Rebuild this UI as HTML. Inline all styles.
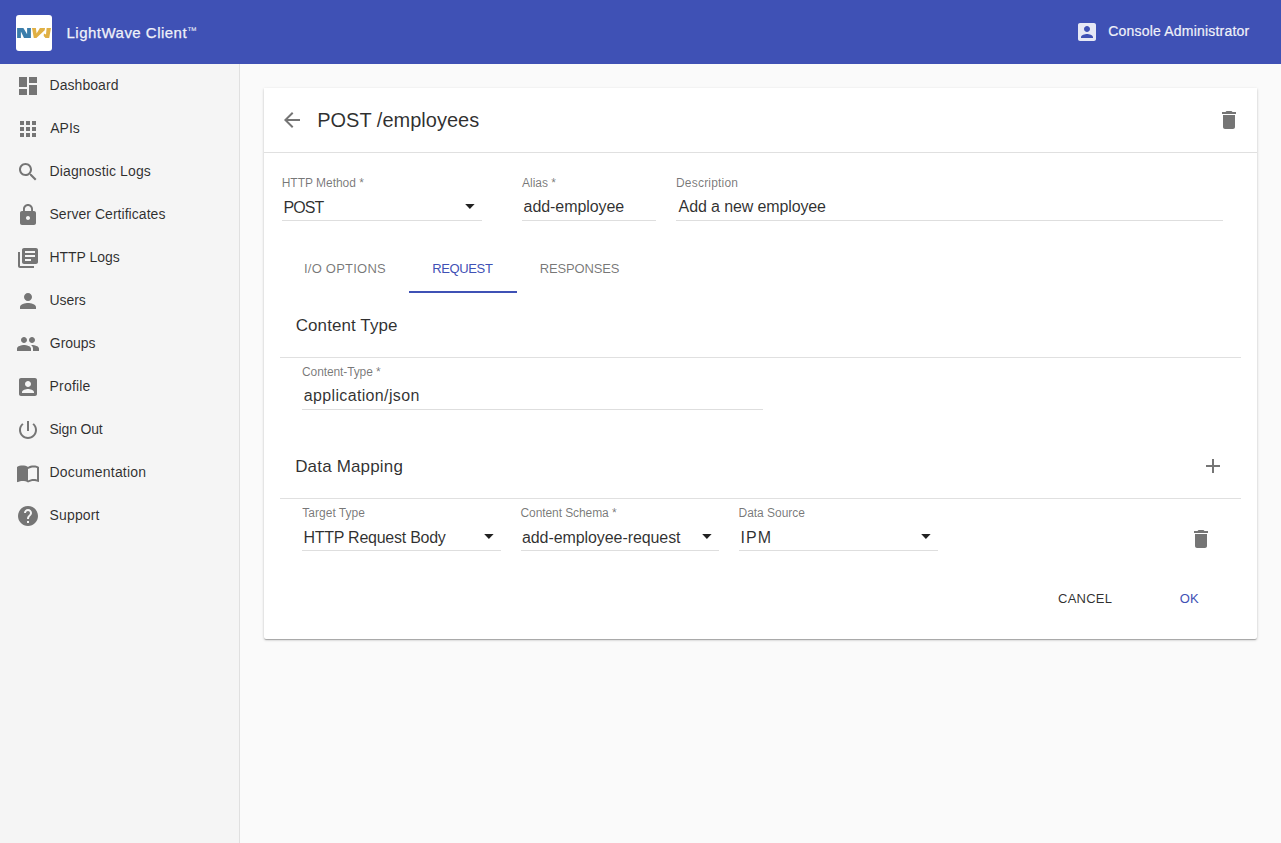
<!DOCTYPE html>
<html><head><meta charset="utf-8">
<style>
*{box-sizing:border-box;margin:0;padding:0}
html,body{width:1281px;height:843px;overflow:hidden;background:#fafafa;font-family:"Liberation Sans",sans-serif;color:rgba(0,0,0,.87)}
.t{position:absolute;white-space:nowrap;line-height:1}
.ic{position:absolute}
.hr{position:absolute;height:1px;background:#e0e0e0}
.ul{position:absolute;height:1px;background:#dedede}
.tri{position:absolute;width:0;height:0;border-left:5px solid transparent;border-right:5px solid transparent;border-top:5px solid rgba(0,0,0,.87)}
</style></head><body>
<div style="position:absolute;left:0;top:0;width:1281px;height:64px;background:#3f51b5"></div>
<div style="position:absolute;left:16px;top:15px;width:36px;height:36px;background:#fff;border-radius:3px"></div>
<svg width="36" height="36" viewBox="0 0 36 36" style="position:absolute;left:16px;top:15px">
<path d="M1.1 13 L7.4 13 L11.1 19.3 L11.1 13 L14.9 13 L14.9 23 L8 23 L4.9 16.6 L4.9 23 L1.1 23 Z" fill="#3b7eab"/>
<path d="M16 13 L19.9 13 L20.6 18.5 L23.9 13 L29 13 L28.7 15.3 L20.4 23 L17.8 23 Z" fill="#e0b045"/>
<path d="M30.6 13 L35 13 L33.2 23 L29.5 23 L27.7 21 L27.9 18.5 L30 19.5 Z" fill="#e0b045"/>
</svg>
<svg class="ic" viewBox="0 0 24 24" style="left:1075px;top:20px;width:24px;height:24px;fill:#e6e8f5"><path d="M3 5v14c0 1.1.89 2 2 2h14c1.1 0 2-.9 2-2V5c0-1.1-.9-2-2-2H5c-1.11 0-2 .9-2 2zm12 4c0 1.66-1.34 3-3 3s-3-1.34-3-3 1.34-3 3-3 3 1.34 3 3zm-9 8c0-2 4-3.1 6-3.1s6 1.1 6 3.1v1H6v-1z"/></svg>
<div style="position:absolute;left:0;top:64px;width:240px;height:779px;background:#f5f5f5;border-right:1px solid #e0e0e0"></div>
<svg class="ic" viewBox="0 0 24 24" style="left:16px;top:74px;width:24px;height:24px;fill:#757575"><path d="M3 13h8V3H3v10zm0 8h8v-6H3v6zm10 0h8V11h-8v10zm0-18v6h8V3h-8z"/></svg>
<svg class="ic" viewBox="0 0 24 24" style="left:16px;top:117px;width:24px;height:24px;fill:#757575"><path d="M4 8h4V4H4v4zm6 12h4v-4h-4v4zm-6 0h4v-4H4v4zm0-6h4v-4H4v4zm6 0h4v-4h-4v4zm6-10v4h4V4h-4zm-6 4h4V4h-4v4zm6 6h4v-4h-4v4zm0 6h4v-4h-4v4z"/></svg>
<svg class="ic" viewBox="0 0 24 24" style="left:16px;top:160px;width:24px;height:24px;fill:#757575"><path d="M15.5 14h-.79l-.28-.27C15.41 12.59 16 11.11 16 9.5 16 5.91 13.09 3 9.5 3S3 5.91 3 9.5 5.91 16 9.5 16c1.61 0 3.09-.59 4.23-1.57l.27.28v.79l5 4.99L20.49 19l-4.99-5zm-6 0C7.01 14 5 11.99 5 9.5S7.01 5 9.5 5 14 7.01 14 9.5 11.99 14 9.5 14z"/></svg>
<svg class="ic" viewBox="0 0 24 24" style="left:16px;top:203px;width:24px;height:24px;fill:#757575"><path d="M18 8h-1V6c0-2.76-2.24-5-5-5S7 3.24 7 6v2H6c-1.1 0-2 .9-2 2v10c0 1.1.9 2 2 2h12c1.1 0 2-.9 2-2V10c0-1.1-.9-2-2-2zm-6 9c-1.1 0-2-.9-2-2s.9-2 2-2 2 .9 2 2-.9 2-2 2zm3.1-9H8.9V6c0-1.71 1.39-3.1 3.1-3.1 1.71 0 3.1 1.39 3.1 3.1v2z"/></svg>
<svg class="ic" viewBox="0 0 24 24" style="left:16px;top:246px;width:24px;height:24px;fill:#757575"><path d="M4 6H2v14c0 1.1.9 2 2 2h14v-2H4V6zm16-4H8c-1.1 0-2 .9-2 2v12c0 1.1.9 2 2 2h12c1.1 0 2-.9 2-2V4c0-1.1-.9-2-2-2zm-1 9H9V9h10v2zm-4 4H9v-2h6v2zm4-8H9V5h10v2z"/></svg>
<svg class="ic" viewBox="0 0 24 24" style="left:16px;top:289px;width:24px;height:24px;fill:#757575"><path d="M12 12c2.21 0 4-1.79 4-4s-1.79-4-4-4-4 1.79-4 4 1.79 4 4 4zm0 2c-2.67 0-8 1.34-8 4v2h16v-2c0-2.66-5.33-4-8-4z"/></svg>
<svg class="ic" viewBox="0 0 24 24" style="left:16px;top:332px;width:24px;height:24px;fill:#757575"><path d="M16 11c1.66 0 2.99-1.34 2.99-3S17.66 5 16 5c-1.66 0-3 1.34-3 3s1.34 3 3 3zm-8 0c1.66 0 2.99-1.34 2.99-3S9.66 5 8 5C6.34 5 5 6.34 5 8s1.34 3 3 3zm0 2c-2.33 0-7 1.17-7 3.5V19h14v-2.5c0-2.33-4.67-3.5-7-3.5zm8 0c-.29 0-.62.02-.97.05 1.16.84 1.97 1.97 1.97 3.45V19h6v-2.5c0-2.330-4.67-3.5-7-3.5z"/></svg>
<svg class="ic" viewBox="0 0 24 24" style="left:16px;top:375px;width:24px;height:24px;fill:#757575"><path d="M3 5v14c0 1.1.89 2 2 2h14c1.1 0 2-.9 2-2V5c0-1.1-.9-2-2-2H5c-1.11 0-2 .9-2 2zm12 4c0 1.66-1.34 3-3 3s-3-1.34-3-3 1.34-3 3-3 3 1.34 3 3zm-9 8c0-2 4-3.1 6-3.1s6 1.1 6 3.1v1H6v-1z"/></svg>
<svg class="ic" viewBox="0 0 24 24" style="left:16px;top:418px;width:24px;height:24px;fill:#757575"><path d="M13 3h-2v10h2V3zm4.83 2.17l-1.42 1.42C17.99 7.86 19 9.81 19 12c0 3.87-3.13 7-7 7s-7-3.13-7-7c0-2.19 1.01-4.14 2.58-5.42L6.17 5.17C4.23 6.82 3 9.26 3 12c0 4.97 4.03 9 9 9s9-4.03 9-9c0-2.74-1.23-5.18-3.17-6.83z"/></svg>
<svg class="ic" viewBox="0 0 24 24" style="left:16px;top:461px;width:24px;height:24px;fill:#757575"><path d="M21 5c-1.11-.35-2.33-.5-3.5-.5-1.95 0-4.05.4-5.5 1.5-1.45-1.1-3.55-1.5-5.5-1.5S2.45 4.9 1 6v14.65c0 .25.25.5.5.5.1 0 .15-.05.25-.05C3.1 20.45 5.05 20 6.5 20c1.95 0 4.05.4 5.5 1.5 1.35-.85 3.8-1.5 5.5-1.5 1.65 0 3.35.3 4.75 1.05.1.05.15.05.25.05.25 0 .5-.25.5-.5V6c-.6-.45-1.25-.75-2-1zm0 13.5c-1.1-.35-2.3-.5-3.5-.5-1.7 0-4.15.65-5.5 1.5V8c1.35-.85 3.8-1.5 5.5-1.5 1.2 0 2.4.15 3.5.5v11.5z"/></svg>
<svg class="ic" viewBox="0 0 24 24" style="left:16px;top:504px;width:24px;height:24px;fill:#757575"><path d="M12 2C6.48 2 2 6.48 2 12s4.48 10 10 10 10-4.48 10-10S17.52 2 12 2zm1 17h-2v-2h2v2zm2.07-7.75l-.9.92C13.45 12.9 13 13.5 13 15h-2v-.5c0-1.1.45-2.1 1.17-2.83l1.24-1.26c.37-.36.59-.86.59-1.41 0-1.1-.9-2-2-2s-2 .9-2 2H8c0-2.21 1.79-4 4-4s4 1.79 4 4c0 .88-.36 1.68-.93 2.25z"/></svg>
<div style="position:absolute;left:264px;top:88px;width:993px;height:551px;background:#fff;border-radius:0 0 2px 2px;box-shadow:0 1px 3px rgba(0,0,0,.2),0 1px 1px rgba(0,0,0,.14),0 2px 1px -1px rgba(0,0,0,.12)"></div>
<svg class="ic" viewBox="0 0 24 24" style="left:280px;top:108px;width:24px;height:24px;fill:#757575"><path d="M20 11H7.83l5.59-5.59L12 4l-8 8 8 8 1.41-1.41L7.83 13H20v-2z"/></svg>
<svg class="ic" viewBox="0 0 24 24" style="left:1217px;top:108px;width:24px;height:24px;fill:#757575"><path d="M6 19c0 1.1.9 2 2 2h8c1.1 0 2-.9 2-2V7H6v12zM19 4h-3.5l-1-1h-5l-1 1H5v2h14V4z"/></svg>
<div class="hr" style="left:264px;top:152px;width:993px"></div>
<svg style="position:absolute;left:465px;top:204px" width="10" height="5" viewBox="0 0 10 5"><path d="M0.2 0 L9.6 0 L4.9 4.9 Z" fill="rgba(0,0,0,.87)"/></svg>
<div class="ul" style="left:282px;top:220px;width:200px"></div>
<div class="ul" style="left:522px;top:220px;width:134px"></div>
<div class="ul" style="left:676px;top:220px;width:547px"></div>
<div style="position:absolute;left:409px;top:291px;width:108px;height:2px;background:#3f51b5"></div>
<div class="hr" style="left:280px;top:357px;width:961px"></div>
<div class="ul" style="left:302px;top:409px;width:461px"></div>
<svg class="ic" viewBox="0 0 24 24" style="left:1201px;top:454px;width:24px;height:24px;fill:#757575"><path d="M19 13h-6v6h-2v-6H5v-2h6V5h2v6h6v2z"/></svg>
<div class="hr" style="left:280px;top:498px;width:961px"></div>
<svg style="position:absolute;left:484px;top:534px" width="10" height="5" viewBox="0 0 10 5"><path d="M0.2 0 L9.6 0 L4.9 4.9 Z" fill="rgba(0,0,0,.87)"/></svg>
<div class="ul" style="left:302px;top:550px;width:199px"></div>
<svg style="position:absolute;left:702px;top:534px" width="10" height="5" viewBox="0 0 10 5"><path d="M0.2 0 L9.6 0 L4.9 4.9 Z" fill="rgba(0,0,0,.87)"/></svg>
<div class="ul" style="left:521px;top:550px;width:198px"></div>
<svg style="position:absolute;left:921px;top:534px" width="10" height="5" viewBox="0 0 10 5"><path d="M0.2 0 L9.6 0 L4.9 4.9 Z" fill="rgba(0,0,0,.87)"/></svg>
<div class="ul" style="left:739px;top:550px;width:199px"></div>
<svg class="ic" viewBox="0 0 24 24" style="left:1189px;top:527px;width:24px;height:24px;fill:#757575"><path d="M6 19c0 1.1.9 2 2 2h8c1.1 0 2-.9 2-2V7H6v12zM19 4h-3.5l-1-1h-5l-1 1H5v2h14V4z"/></svg>
<div class="t" id="title" style="left:66.56px;top:25.00px;font-size:15px;letter-spacing:0.482px;color:#f0f1f9;-webkit-text-stroke:0.25px #f0f1f9;">LightWave Client</div>
<div class="t" id="tm" style="left:187.00px;top:26.00px;font-size:10px;letter-spacing:0.000px;color:#f0f1f9;">™</div>
<div class="t" id="admin" style="left:1108.24px;top:24.01px;font-size:14px;letter-spacing:0.200px;color:#f0f1f9;-webkit-text-stroke:0.2px #f0f1f9;">Console Administrator</div>
<div class="t" id="n0" style="left:49.51px;top:78.01px;font-size:14px;letter-spacing:0.057px;color:rgba(0,0,0,.82);">Dashboard</div>
<div class="t" id="n1" style="left:50.28px;top:121.01px;font-size:14px;letter-spacing:0.000px;color:rgba(0,0,0,.82);">APIs</div>
<div class="t" id="n2" style="left:49.51px;top:164.01px;font-size:14px;letter-spacing:0.123px;color:rgba(0,0,0,.82);">Diagnostic Logs</div>
<div class="t" id="n3" style="left:49.46px;top:207.01px;font-size:14px;letter-spacing:0.046px;color:rgba(0,0,0,.82);">Server Certificates</div>
<div class="t" id="n4" style="left:49.51px;top:250.01px;font-size:14px;letter-spacing:-0.034px;color:rgba(0,0,0,.82);">HTTP Logs</div>
<div class="t" id="n5" style="left:49.56px;top:293.01px;font-size:14px;letter-spacing:-0.060px;color:rgba(0,0,0,.82);">Users</div>
<div class="t" id="n6" style="left:49.78px;top:336.01px;font-size:14px;letter-spacing:-0.022px;color:rgba(0,0,0,.82);">Groups</div>
<div class="t" id="n7" style="left:49.51px;top:379.01px;font-size:14px;letter-spacing:0.199px;color:rgba(0,0,0,.82);">Profile</div>
<div class="t" id="n8" style="left:49.46px;top:422.01px;font-size:14px;letter-spacing:-0.175px;color:rgba(0,0,0,.82);">Sign Out</div>
<div class="t" id="n9" style="left:49.51px;top:465.01px;font-size:14px;letter-spacing:0.198px;color:rgba(0,0,0,.82);">Documentation</div>
<div class="t" id="n10" style="left:49.46px;top:508.01px;font-size:14px;letter-spacing:0.171px;color:rgba(0,0,0,.82);">Support</div>
<div class="t" id="ptitle" style="left:317.20px;top:110.01px;font-size:20px;letter-spacing:0.005px;color:rgba(0,0,0,.82);">POST /employees</div>
<div class="t" id="l1" style="left:281.70px;top:177.01px;font-size:12px;letter-spacing:-0.022px;color:rgba(0,0,0,.54);">HTTP Method *</div>
<div class="t" id="v1" style="left:283.61px;top:200.01px;font-size:16px;letter-spacing:-0.961px;color:rgba(0,0,0,.82);">POST</div>
<div class="t" id="l2" style="left:522.06px;top:177.01px;font-size:12px;letter-spacing:-0.035px;color:rgba(0,0,0,.54);">Alias *</div>
<div class="t" id="v2" style="left:523.56px;top:199.01px;font-size:16px;letter-spacing:-0.063px;color:rgba(0,0,0,.82);">add-employee</div>
<div class="t" id="l3" style="left:676.01px;top:177.01px;font-size:12px;letter-spacing:0.199px;color:rgba(0,0,0,.54);">Description</div>
<div class="t" id="v3" style="left:678.62px;top:199.01px;font-size:16px;letter-spacing:-0.122px;color:rgba(0,0,0,.82);">Add a new employee</div>
<div class="t" id="tab1" style="left:303.95px;top:262.00px;font-size:13px;letter-spacing:0.235px;color:rgba(0,0,0,.54);">I/O OPTIONS</div>
<div class="t" id="tab2" style="left:432.33px;top:262.00px;font-size:13px;letter-spacing:-0.392px;color:#3f51b5;">REQUEST</div>
<div class="t" id="tab3" style="left:539.78px;top:262.00px;font-size:13px;letter-spacing:-0.151px;color:rgba(0,0,0,.54);">RESPONSES</div>
<div class="t" id="sec1" style="left:295.73px;top:317.00px;font-size:17px;letter-spacing:0.087px;color:rgba(0,0,0,.82);">Content Type</div>
<div class="t" id="l4" style="left:302.01px;top:366.01px;font-size:12px;letter-spacing:-0.107px;color:rgba(0,0,0,.54);">Content-Type *</div>
<div class="t" id="v4" style="left:303.72px;top:388.01px;font-size:16px;letter-spacing:0.352px;color:rgba(0,0,0,.82);">application/json</div>
<div class="t" id="sec2" style="left:295.17px;top:458.00px;font-size:17px;letter-spacing:0.173px;color:rgba(0,0,0,.82);">Data Mapping</div>
<div class="t" id="l5" style="left:302.35px;top:507.01px;font-size:12px;letter-spacing:0.006px;color:rgba(0,0,0,.54);">Target Type</div>
<div class="t" id="v5" style="left:303.39px;top:530.01px;font-size:16px;letter-spacing:-0.247px;color:rgba(0,0,0,.82);">HTTP Request Body</div>
<div class="t" id="l6" style="left:520.51px;top:507.01px;font-size:12px;letter-spacing:-0.088px;color:rgba(0,0,0,.54);">Content Schema *</div>
<div class="t" id="v6" style="left:521.95px;top:530.01px;font-size:16px;letter-spacing:-0.078px;color:rgba(0,0,0,.82);">add-employee-request</div>
<div class="t" id="l7" style="left:738.56px;top:507.01px;font-size:12px;letter-spacing:-0.033px;color:rgba(0,0,0,.54);">Data Source</div>
<div class="t" id="v7" style="left:740.55px;top:530.01px;font-size:16px;letter-spacing:1.079px;color:rgba(0,0,0,.82);">IPM</div>
<div class="t" id="cancel" style="left:1057.99px;top:592.00px;font-size:13px;letter-spacing:0.256px;color:rgba(0,0,0,.82);">CANCEL</div>
<div class="t" id="ok" style="left:1179.70px;top:592.00px;font-size:13px;letter-spacing:0.095px;color:#3f51b5;">OK</div>
</body></html>
